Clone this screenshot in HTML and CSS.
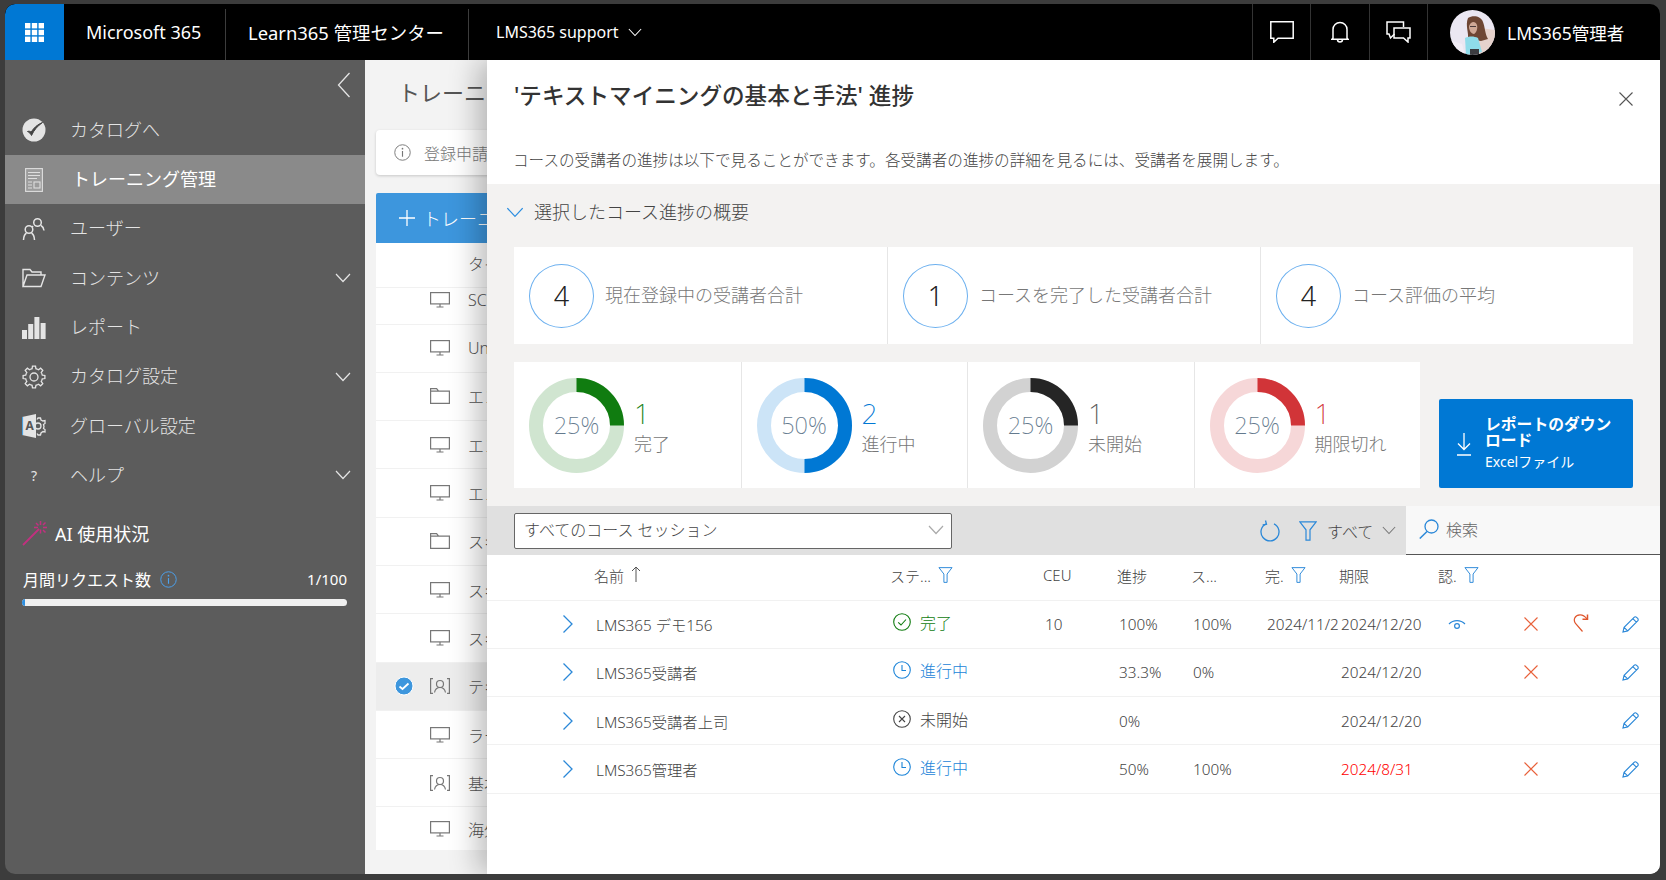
FILE: index.html
```html
<!DOCTYPE html>
<html lang="ja">
<head>
<meta charset="utf-8">
<title>Learn365 管理センター</title>
<link rel="stylesheet" href="styles.css">
</head>
<body>
<svg class="sprite" xmlns="http://www.w3.org/2000/svg">
  <symbol id="waffle" viewBox="0 0 19 19"><g fill="currentColor"><rect width="5.4" height="5.4"/><rect x="6.8" width="5.4" height="5.4"/><rect x="13.6" width="5.4" height="5.4"/><rect y="6.8" width="5.4" height="5.4"/><rect x="6.8" y="6.8" width="5.4" height="5.4"/><rect x="13.6" y="6.8" width="5.4" height="5.4"/><rect y="13.6" width="5.4" height="5.4"/><rect x="6.8" y="13.6" width="5.4" height="5.4"/><rect x="13.6" y="13.6" width="5.4" height="5.4"/></g></symbol>
  <symbol id="chev-down" viewBox="0 0 16 10"><path d="M1 1l7 7.5L15 1" fill="none" stroke="currentColor" stroke-width="1.2"/></symbol>
  <symbol id="chev-right" viewBox="0 0 12 20"><path d="M1.5 1.5L10 10l-8.500 8.500" fill="none" stroke="currentColor" stroke-width="1.3"/></symbol>
  <symbol id="chev-left" viewBox="0 0 14 26"><path d="M12.500 1L1.500 13l11 12" fill="none" stroke="currentColor" stroke-width="1.300"/></symbol>
  <symbol id="comment" viewBox="0 0 24 22"><path d="M.8.800h22.400v16.400H8l-4.200 4v-4H.8z" fill="none" stroke="currentColor" stroke-width="1.500"/></symbol>
  <symbol id="bell" viewBox="0 0 18 22"><path d="M2 17V8.500a7 7 0 0 1 14 0V17l1 1.200H1zM6.500 18.500a2.500 2.500 0 0 0 5 0" fill="none" stroke="currentColor" stroke-width="1.500"/></symbol>
  <symbol id="chat" viewBox="0 0 25 22"><path d="M17.500 6V1H1v12h2l1.500 4 4-4" fill="none" stroke="currentColor" stroke-width="1.500"/><path d="M8 7h16v10h-2v4l-4.500-4H8z" fill="none" stroke="currentColor" stroke-width="1.500"/></symbol>
  <symbol id="close" viewBox="0 0 14 14"><path d="M.5.500l13 13M13.500.500l-13 13" fill="none" stroke="currentColor" stroke-width="1.100"/></symbol>
  <symbol id="catalog" viewBox="0 0 24 24"><circle cx="12" cy="12" r="11.500" fill="currentColor"/><path d="M5.500 13.500c1.800.8 3 2 4 4 2.500-5.500 6-9.500 11-13-5 2-8.500 5-11.300 9.500-1.200-.8-2.500-1-3.700-.5z" fill="#444" stroke="#444" stroke-width="1"/></symbol>
  <symbol id="doc" viewBox="0 0 18 24"><g fill="none" stroke="currentColor" stroke-width="1.100"><rect x=".6" y=".6" width="16.800" height="22.800" fill="#9c9c9c"/><path d="M3 4.500h12M3 7.500h12M3 10.500h9M3 14h4M3 17h4M3 20h4"/><rect x="9" y="14" width="6" height="6"/></g></symbol>
  <symbol id="users" viewBox="0 0 24 24"><g fill="none" stroke="currentColor" stroke-width="1.500"><circle cx="15.500" cy="5.500" r="3.800"/><path d="M19 8.500c1.800 1 2.700 2.800 3 5M11 9c-.3.400-.5.700-.6 1.200"/><circle cx="7" cy="12.500" r="3.800"/><path d="M1.500 23c.2-3.500 1.300-6 3-7M12.500 23c-.2-3.500-1.300-6-3-7"/></g></symbol>
  <symbol id="folder-open" viewBox="0 0 24 20"><path d="M1 18.500V1.500h7l2 2.500h9v3M1 18.500L5 7h18l-4 11.500z" fill="none" stroke="currentColor" stroke-width="1.400"/></symbol>
  <symbol id="bars" viewBox="0 0 24 22"><g fill="currentColor"><rect y="13" width="5" height="9"/><rect x="6.200" y="7" width="5" height="15"/><rect x="12.400" width="5" height="22"/><rect x="18.600" y="6" width="5" height="16"/></g></symbol>
  <symbol id="gear" viewBox="0 0 24 24"><g fill="none" stroke="currentColor" stroke-width="1.300"><circle cx="12" cy="12" r="4"/><path id="tooth" d="M8.750 4.150L10.090 3.720 10.470 1.110H13.530L13.910 3.720 15.250 4.150"/><use href="#tooth" transform="rotate(45 12 12)"/><use href="#tooth" transform="rotate(90 12 12)"/><use href="#tooth" transform="rotate(135 12 12)"/><use href="#tooth" transform="rotate(180 12 12)"/><use href="#tooth" transform="rotate(225 12 12)"/><use href="#tooth" transform="rotate(270 12 12)"/><use href="#tooth" transform="rotate(315 12 12)"/></g></symbol>
  <symbol id="admin" viewBox="0 0 24 24"><g fill="none" stroke="currentColor" stroke-width="1.300"><path d="M15 5.500l1-1.500h2.500l.5 2 2 1 2-.5v3l-1.500 1 .5 2-.5 2 1.500 1v2.500l-2-.5-2 1.500-.5 2H16l-1-1.500"/><circle cx="16" cy="12" r="3"/></g><path d="M0 3l14-3v24L0 21z" fill="currentColor"/><path d="M.5 3v18" stroke="#4ba3e3" stroke-width="1.200"/></symbol>
  <symbol id="wand" viewBox="0 0 26 26"><path d="M1 25L17 9" stroke="#c2307f" stroke-width="1.800" fill="none"/><g stroke="#c2307f" stroke-width="1.500" fill="none"><path d="M18.500 1v4M18.500 9.500v4M12 7.500h4M21 7.500h4M14 3l2.500 2.500M21 10l2.500 2.500M21 5l2.500-2.500"/></g></symbol>
  <symbol id="info" viewBox="0 0 18 18"><circle cx="9" cy="9" r="8.200" fill="none" stroke="currentColor" stroke-width="1"/><path d="M9 7.500v6" stroke="currentColor" stroke-width="1.200"/><circle cx="9" cy="5" r=".9" fill="currentColor"/></symbol>
  <symbol id="plus" viewBox="0 0 16 16"><path d="M8 0v16M0 8h16" stroke="currentColor" stroke-width="1.300" fill="none"/></symbol>
  <symbol id="monitor" viewBox="0 0 20 16"><g fill="none" stroke="currentColor" stroke-width="1.200"><rect x=".6" y=".6" width="18.800" height="11.300"/><path d="M10 12v3M6.500 15h7"/></g></symbol>
  <symbol id="folder" viewBox="0 0 20 16"><path d="M.6 15.400V.6h6l2 2.600h10.800v12.200zM.6 3.200h8" fill="none" stroke="currentColor" stroke-width="1.200"/></symbol>
  <symbol id="classroom" viewBox="0 0 20 16"><g fill="none" stroke="currentColor" stroke-width="1.200"><path d="M3 .6H.6v14.800H3M17 .6h2.400v14.800H17"/><circle cx="10" cy="6" r="3.500"/><path d="M4.500 14.500c.6-3 2.500-5 5.500-5s4.900 2 5.500 5"/></g></symbol>
  <symbol id="check-badge" viewBox="0 0 20 20"><circle cx="10" cy="10" r="9" fill="#3d96dd" stroke="#fff" stroke-width="1"/><path d="M5.500 10.500l3 2.500 6-5.500" fill="none" stroke="#fff" stroke-width="1.800"/></symbol>
  <symbol id="download" viewBox="0 0 16 24"><path d="M8 1v16M2 11.500l6 6 6-6M1 23h14" fill="none" stroke="currentColor" stroke-width="1.300"/></symbol>
  <symbol id="refresh" viewBox="0 0 20 22"><path d="M6 3.800A9 9 0 1 0 14 3.800" fill="none" stroke="currentColor" stroke-width="1.300"/><path d="M5.500 .5l1 3.800-3.800 .7" fill="none" stroke="currentColor" stroke-width="1.300"/></symbol>
  <symbol id="filter" viewBox="0 0 18 20"><path d="M.8.800h16.400L11 8.800v10.400H7V8.800z" fill="none" stroke="currentColor" stroke-width="1.200"/></symbol>
  <symbol id="search" viewBox="0 0 20 20"><circle cx="12.500" cy="7.500" r="6.500" fill="none" stroke="currentColor" stroke-width="1.300"/><path d="M8 12.500L.8 19.500" fill="none" stroke="currentColor" stroke-width="1.500"/></symbol>
  <symbol id="arrow-up" viewBox="0 0 10 16"><path d="M5 16V1M1 5l4-4 4 4" fill="none" stroke="currentColor" stroke-width="1"/></symbol>
  <symbol id="ok-circle" viewBox="0 0 18 18"><circle cx="9" cy="9" r="8.300" fill="none" stroke="currentColor" stroke-width="1.100"/><path d="M5.200 9.300l2.800 2.700 5-5.500" fill="none" stroke="currentColor" stroke-width="1.100"/></symbol>
  <symbol id="clock" viewBox="0 0 18 18"><circle cx="9" cy="9" r="8.300" fill="none" stroke="currentColor" stroke-width="1.100"/><path d="M9 4v5.500h4" fill="none" stroke="currentColor" stroke-width="1.100"/></symbol>
  <symbol id="x-circle" viewBox="0 0 18 18"><circle cx="9" cy="9" r="8.300" fill="none" stroke="currentColor" stroke-width="1.100"/><path d="M6 6l6 6M12 6l-6 6" fill="none" stroke="currentColor" stroke-width="1.100"/></symbol>
  <symbol id="eye" viewBox="0 0 18 12"><path d="M1 6a11 11 0 0 1 16 0" fill="none" stroke="currentColor" stroke-width="1.200"/><circle cx="9" cy="8" r="2.400" fill="none" stroke="currentColor" stroke-width="1.200"/></symbol>
  <symbol id="redo" viewBox="0 0 16 18"><path d="M9.500 17.500L2.500 9.500C0 6 1.500 1 7 .8c3-.1 5 1.500 7 4" fill="none" stroke="currentColor" stroke-width="1.200"/><path d="M9.500 5.200h5V.5" fill="none" stroke="currentColor" stroke-width="1.500"/></symbol>
  <symbol id="pencil" viewBox="0 0 18 18"><path d="M1 17l1.200-5L12.800 1.400a1.800 1.800 0 0 1 2.600 0l1.200 1.200a1.800 1.800 0 0 1 0 2.600L6 15.800zM2.200 12L6 15.800M11.500 2.800l3.700 3.700" fill="none" stroke="currentColor" stroke-width="1.200"/></symbol>
</svg>

<div class="window">
  <header class="topbar">
    <div class="waffle"><svg class="i-waffle"><use href="#waffle"/></svg></div>
    <div class="brand">Microsoft 365</div>
    <span class="sep"></span>
    <div class="app">Learn365 管理センター</div>
    <span class="sep"></span>
    <div class="tenant">LMS365 support<svg class="i-tenant"><use href="#chev-down"/></svg></div>
    <div class="top-right">
      <div class="top-cell"><svg class="i-comment"><use href="#comment"/></svg></div>
      <div class="top-cell"><svg class="i-bell"><use href="#bell"/></svg></div>
      <div class="top-cell"><svg class="i-chat"><use href="#chat"/></svg></div>
      <div class="top-user">
        <svg class="avatar" viewBox="0 0 45 45">
          <rect width="45" height="45" fill="#ebe7f2"/>
          <path d="M30 18l15 2v25H28z" fill="#e6d2cc"/>
          <path d="M0 30l12 4 3 11H0z" fill="#f2eef6"/>
          <path d="M18 8c5-3 13-2 15 4 2 5 2 12 5 17l-7 2-13-2c1-6-3-14 0-21z" fill="#6e4634"/>
          <path d="M21 13c2-2 5-1 6 2 1 4-1 8-3 9-3 0-5-4-5-7 0-2 1-3 2-4z" fill="#cfa896"/>
          <path d="M20 16.500h6" stroke="#4a3a3a" stroke-width="1"/>
          <path d="M15 28c4-2 9-2 13 0l4 14-16 3z" fill="#8fdcea"/>
          <path d="M20 39h9v6h-9z" fill="#3c3c40"/>
        </svg>
        <span>LMS365管理者</span>
      </div>
    </div>
  </header>

  <div class="content">
    <nav class="sidebar">
      <div class="collapse"><svg class="i-collapse"><use href="#chev-left"/></svg></div>
      <a class="nav-item"><svg class="nav-icon"><use href="#catalog"/></svg><span>カタログへ</span></a>
      <a class="nav-item active"><svg class="nav-icon i-doc"><use href="#doc"/></svg><span>トレーニング管理</span></a>
      <a class="nav-item"><svg class="nav-icon"><use href="#users"/></svg><span>ユーザー</span></a>
      <a class="nav-item"><svg class="nav-icon"><use href="#folder-open"/></svg><span>コンテンツ</span><svg class="nav-chev"><use href="#chev-down"/></svg></a>
      <a class="nav-item"><svg class="nav-icon"><use href="#bars"/></svg><span>レポート</span></a>
      <a class="nav-item"><svg class="nav-icon"><use href="#gear"/></svg><span>カタログ設定</span><svg class="nav-chev"><use href="#chev-down"/></svg></a>
      <a class="nav-item"><svg class="nav-icon" viewBox="0 0 24 24"><use href="#admin"/><text x="3.500" y="16" class="admin-a">A</text></svg><span>グローバル設定</span></a>
      <a class="nav-item"><b class="nav-q">?</b><span>ヘルプ</span><svg class="nav-chev"><use href="#chev-down"/></svg></a>
      <div class="ai-title"><svg class="i-wand"><use href="#wand"/></svg><span>AI 使用状況</span></div>
      <div class="ai-row"><span>月間リクエスト数</span><svg class="i-ai-info"><use href="#info"/></svg><span class="ai-count">1/100</span></div>
      <div class="ai-bar"><div class="ai-fill" style="width:1%"></div></div>
    </nav>

    <main class="main">
      <h1 class="page-title">トレーニング管理</h1>
      <div class="notice"><svg class="i-notice"><use href="#info"/></svg><span>登録申請があります</span></div>
      <div class="add-btn"><svg class="i-plus"><use href="#plus"/></svg><span>トレーニングの追加</span></div>
      <div class="list">
        <div class="list-head">タイトル</div>
        <div class="list-row first"><span></span><svg class="i-list"><use href="#monitor"/></svg><span>SCORM</span></div>
        <div class="list-row"><span></span><svg class="i-list"><use href="#monitor"/></svg><span>Unit</span></div>
        <div class="list-row"><span></span><svg class="i-list"><use href="#folder"/></svg><span>エンゲージ</span></div>
        <div class="list-row"><span></span><svg class="i-list"><use href="#monitor"/></svg><span>エンゲージ</span></div>
        <div class="list-row"><span></span><svg class="i-list"><use href="#monitor"/></svg><span>エンゲージ</span></div>
        <div class="list-row"><span></span><svg class="i-list"><use href="#folder"/></svg><span>スキル</span></div>
        <div class="list-row"><span></span><svg class="i-list"><use href="#monitor"/></svg><span>スキル</span></div>
        <div class="list-row"><span></span><svg class="i-list"><use href="#monitor"/></svg><span>スキル</span></div>
        <div class="list-row selected"><svg class="i-check"><use href="#check-badge"/></svg><svg class="i-list"><use href="#classroom"/></svg><span>テキスト</span></div>
        <div class="list-row"><span></span><svg class="i-list"><use href="#monitor"/></svg><span>ラーニング</span></div>
        <div class="list-row"><span></span><svg class="i-list"><use href="#classroom"/></svg><span>基本</span></div>
        <div class="list-row last"><span></span><svg class="i-list"><use href="#monitor"/></svg><span>海外</span></div>
      </div>

      <section class="panel">
        <div class="panel-head">
          <h2 class="panel-title">'テキストマイニングの基本と手法' 進捗</h2>
          <svg class="i-close"><use href="#close"/></svg>
        </div>
        <p class="panel-desc">コースの受講者の進捗は以下で見ることができます。各受講者の進捗の詳細を見るには、受講者を展開します。</p>

        <div class="summary">
          <div class="summary-toggle"><svg class="i-toggle"><use href="#chev-down"/></svg><span>選択したコース進捗の概要</span></div>
          <div class="stats">
            <div class="stat"><span class="stat-num">4</span><span class="stat-label">現在登録中の受講者合計</span></div>
            <div class="stat"><span class="stat-num">1</span><span class="stat-label">コースを完了した受講者合計</span></div>
            <div class="stat"><span class="stat-num">4</span><span class="stat-label">コース評価の平均</span></div>
          </div>
          <div class="charts">
            <div class="donuts">
              <div class="donut-card green">
                <div class="donut"><svg viewBox="0 0 95 95"><circle class="track" cx="47.500" cy="47.500" r="40.500"/><circle class="arc" cx="47.500" cy="47.500" r="40.500" pathLength="100" stroke-dasharray="25 75" transform="rotate(-90 47.500 47.500)"/></svg><span>25%</span></div>
                <div class="donut-text"><b>1</b><span>完了</span></div>
              </div>
              <div class="donut-card blue">
                <div class="donut"><svg viewBox="0 0 95 95"><circle class="track" cx="47.500" cy="47.500" r="40.500"/><circle class="arc" cx="47.500" cy="47.500" r="40.500" pathLength="100" stroke-dasharray="50 50" transform="rotate(-90 47.500 47.500)"/></svg><span>50%</span></div>
                <div class="donut-text"><b>2</b><span>進行中</span></div>
              </div>
              <div class="donut-card black">
                <div class="donut"><svg viewBox="0 0 95 95"><circle class="track" cx="47.500" cy="47.500" r="40.500"/><circle class="arc" cx="47.500" cy="47.500" r="40.500" pathLength="100" stroke-dasharray="25 75" transform="rotate(-90 47.500 47.500)"/></svg><span>25%</span></div>
                <div class="donut-text"><b>1</b><span>未開始</span></div>
              </div>
              <div class="donut-card red">
                <div class="donut"><svg viewBox="0 0 95 95"><circle class="track" cx="47.500" cy="47.500" r="40.500"/><circle class="arc" cx="47.500" cy="47.500" r="40.500" pathLength="100" stroke-dasharray="25 75" transform="rotate(-90 47.500 47.500)"/></svg><span>25%</span></div>
                <div class="donut-text"><b>1</b><span>期限切れ</span></div>
              </div>
            </div>
            <div class="download">
              <svg class="i-download"><use href="#download"/></svg>
              <div class="download-text"><strong>レポートのダウンロード</strong><span>Excelファイル</span></div>
            </div>
          </div>
        </div>

        <div class="toolbar">
          <div class="select"><span>すべてのコース セッション</span><svg class="i-select"><use href="#chev-down"/></svg></div>
          <svg class="i-refresh"><use href="#refresh"/></svg>
          <svg class="i-tfilter"><use href="#filter"/></svg>
          <span class="all">すべて</span>
          <svg class="i-all"><use href="#chev-down"/></svg>
          <div class="search"><svg class="i-search"><use href="#search"/></svg><span>検索</span></div>
        </div>

        <div class="t-row t-head">
          <span></span>
          <span class="th name">名前<svg class="i-sort"><use href="#arrow-up"/></svg></span>
          <span class="th">ステ...<svg class="i-fil"><use href="#filter"/></svg></span>
          <span class="th">CEU</span>
          <span class="th">進捗</span>
          <span class="th">ス...</span>
          <span class="th">完.<svg class="i-fil"><use href="#filter"/></svg></span>
          <span class="th">期限</span>
          <span class="th">認.<svg class="i-fil"><use href="#filter"/></svg></span>
        </div>

        <div class="t-row">
          <svg class="i-expand"><use href="#chev-right"/></svg>
          <span>LMS365 デモ156</span>
          <span class="status done"><svg class="i-status"><use href="#ok-circle"/></svg>完了</span>
          <span>10</span><span>100%</span><span>100%</span><span>2024/11/20</span><span>2024/12/20</span>
          <span class="cert"><svg class="i-eye"><use href="#eye"/></svg></span>
          <span class="act"><svg class="i-x"><use href="#close"/></svg></span>
          <span class="act"><svg class="i-redo"><use href="#redo"/></svg></span>
          <span class="act"><svg class="i-pencil"><use href="#pencil"/></svg></span>
        </div>
        <div class="t-row">
          <svg class="i-expand"><use href="#chev-right"/></svg>
          <span>LMS365受講者</span>
          <span class="status going"><svg class="i-status"><use href="#clock"/></svg>進行中</span>
          <span></span><span>33.3%</span><span>0%</span><span></span><span>2024/12/20</span>
          <span class="cert"></span>
          <span class="act"><svg class="i-x"><use href="#close"/></svg></span>
          <span class="act"></span>
          <span class="act"><svg class="i-pencil"><use href="#pencil"/></svg></span>
        </div>
        <div class="t-row">
          <svg class="i-expand"><use href="#chev-right"/></svg>
          <span>LMS365受講者上司</span>
          <span class="status"><svg class="i-status"><use href="#x-circle"/></svg>未開始</span>
          <span></span><span>0%</span><span></span><span></span><span>2024/12/20</span>
          <span class="cert"></span>
          <span class="act"></span>
          <span class="act"></span>
          <span class="act"><svg class="i-pencil"><use href="#pencil"/></svg></span>
        </div>
        <div class="t-row">
          <svg class="i-expand"><use href="#chev-right"/></svg>
          <span>LMS365管理者</span>
          <span class="status going"><svg class="i-status"><use href="#clock"/></svg>進行中</span>
          <span></span><span>50%</span><span>100%</span><span></span><span class="overdue">2024/8/31</span>
          <span class="cert"></span>
          <span class="act"><svg class="i-x"><use href="#close"/></svg></span>
          <span class="act"></span>
          <span class="act"><svg class="i-pencil"><use href="#pencil"/></svg></span>
        </div>
      </section>
    </main>
  </div>
</div>
</body>
</html>
```
FILE: styles.css
```css
* { box-sizing: border-box; }
html, body { margin: 0; height: 100%; }
body {
  background: #3c3c3c;
  font-family: "Noto Sans", "Noto Sans CJK JP", sans-serif;
  font-weight: 300;
  color: #444;
  overflow: hidden;
  padding: 4px 6px 6px 5px;
}
.sprite { display: none; }
svg { display: block; flex: none; }

.window { height: 870px; display: flex; flex-direction: column; border-radius: 10px; overflow: hidden; }

/* top bar */
.topbar { height: 56px; background: #000; color: #fff; display: flex; align-items: center; font-size: 18px; flex: none; font-weight: 400; }
.waffle { width: 59px; height: 56px; background: #0078d4; display: flex; align-items: center; justify-content: center; border-radius: 10px 0 0 0; }
.i-waffle { width: 19px; height: 19px; color: #fff; margin-top: 1px; }
.brand { width: 161px; padding-left: 22px; }
.sep { width: 1px; height: 51px; margin-top: 5px; background: #3c3c3c; }
.app { width: 242px; padding-left: 22px; white-space: nowrap; font-size: 18.400px; }
.tenant { display: flex; align-items: center; gap: 9px; padding-left: 27px; font-size: 16px; }
.i-tenant { width: 14px; height: 9px; }
.top-right { margin-left: auto; display: flex; height: 100%; }
.top-cell { width: 58.400px; border-left: 1px solid #333; display: flex; align-items: center; justify-content: center; }
.i-comment { width: 24px; height: 22px; }
.i-bell { width: 18px; height: 22px; }
.i-chat { width: 25px; height: 22px; }
.top-user { width: 233px; border-left: 1px solid #333; display: flex; align-items: center; gap: 12px; padding-left: 22px; font-size: 17.500px; }
.avatar { width: 45px; height: 45px; border-radius: 50%; filter: blur(.5px); }

/* layout */
.content { flex: 1; display: flex; min-height: 0; }

/* sidebar */
.sidebar { width: 360px; background: #5c5c5c; color: #e4e4e4; display: flex; flex-direction: column; flex: none; }
.collapse { height: 45.700px; display: flex; justify-content: flex-end; align-items: center; padding: 0 14px 0 0; }
.i-collapse { width: 14px; height: 26px; margin-top: 4px; }
.nav-item { height: 49.300px; display: flex; align-items: center; font-size: 18px; padding-left: 17px; }
.nav-item span { padding-bottom: 3px; }
.nav-item.active { background: #8a8a8a; color: #fff; font-weight: 400; }
.nav-item.active span { margin-left: 2px; }
.nav-icon { width: 24px; height: 24px; margin-right: 24px; }
.admin-a { font-size: 12px; font-weight: 700; fill: #555; }
.i-doc { color: #dedede; }
.nav-q { width: 24px; margin-right: 24px; text-align: center; font-size: 14px; font-weight: 400; }
.nav-chev { width: 16px; height: 10px; margin-left: auto; margin-right: 14px; }
.ai-title { display: flex; align-items: center; gap: 7px; margin: 20px 0 0 17px; font-size: 18px; color: #fff; font-weight: 400; height: 26px; }
.ai-title span { margin-top: -1px; }
.i-wand { width: 26px; height: 26px; }
.ai-row { display: flex; align-items: center; margin: 21px 18px 0 18px; font-size: 16px; color: #fff; font-weight: 400; height: 24px; }
.i-ai-info { width: 17px; height: 17px; color: #4ba3f0; margin-left: 9px; }
.ai-count { margin-left: auto; font-size: 15px; }
.ai-bar { height: 7px; margin: 8px 18px 0 17px; background: #f0f0f0; border-radius: 4px; overflow: hidden; }
.ai-fill { height: 100%; background: #2f8fe0; }

/* main behind panel */
.main { flex: 1; background: #f3f3f3; position: relative; overflow: hidden; padding: 0 0 0 11px; }
.page-title { margin: 18px 0 0 22px; font-size: 22px; line-height: 28px; font-weight: 400; color: #555; white-space: nowrap; }
.notice { margin-top: 24px; height: 45px; background: #fff; border-radius: 4px; box-shadow: 0 1px 3px rgba(0,0,0,.18); display: flex; align-items: center; gap: 13px; padding-left: 18px; font-size: 16px; color: #777; width: 400px; }
.i-notice { width: 17px; height: 17px; color: #777; }
.add-btn { margin-top: 18px; height: 50px; width: 400px; background: #3d96dd; color: #fff; display: flex; align-items: center; gap: 8px; padding-left: 23px; font-size: 18px; border-radius: 2px 2px 0 0; }
.i-plus { width: 16px; height: 16px; }
.list { background: #fff; width: 400px; }
.list-head { height: 44px; padding: 8px 0 0 92px; font-size: 16px; color: #555; line-height: 26px; }
.list-row { height: 48.300px; display: grid; grid-template-columns: 54px 20px 1fr; align-items: center; border-top: 1px solid #f1f1f1; font-size: 16px; color: #555; }
.list-row > span:last-child { padding-left: 18px; white-space: nowrap; }
.list-row.first { height: 36.500px; padding-bottom: 12px; }
.list-row.last { height: 44px; }
.list-row.selected { background: #ededed; }
.i-list { width: 20px; height: 16px; color: #777; }
.i-check { width: 20px; height: 20px; margin-left: 18px; }

/* panel */
.panel { position: absolute; top: 0; left: 122px; right: 0; bottom: 0; background: #fff; box-shadow: -8px 0 30px rgba(0,0,0,.28); display: flex; flex-direction: column; border-radius: 0 0 8px 0; overflow: visible; }
.panel-head { display: flex; justify-content: space-between; align-items: flex-start; padding: 21px 27px 0 27px; }
.panel-title { margin: 0; font-size: 22.600px; line-height: 30px; font-weight: 500; color: #333; white-space: nowrap; }
.i-close { width: 14px; height: 14px; margin-top: 11px; color: #555; }
.panel-desc { margin: 37px 0 0 26px; font-size: 15.600px; line-height: 24px; height: 36px; color: #444; white-space: nowrap; }
.summary { background: #f3f2f1; height: 322px; padding: 0 27px; display: flex; flex-direction: column; }
.summary-toggle { height: 56px; display: flex; align-items: center; gap: 10px; font-size: 18px; color: #444; }
.summary-toggle span { padding-bottom: 2px; }
.i-toggle { width: 18px; height: 11px; color: #2e8fe0; margin-left: -8px; }
.stats { margin-top: 7px; height: 97px; background: #fff; display: grid; grid-template-columns: repeat(3, 1fr); flex: none; }
.stat { display: flex; align-items: center; gap: 11px; padding-left: 15px; border-left: 1px solid #e6e6e6; }
.stat:first-child { border-left: 0; }
.stat-num { width: 65px; height: 64px; border: 1px solid #6cb0ef; border-radius: 50%; display: flex; align-items: center; justify-content: center; font-size: 27px; color: #222; flex: none; }
.stat-label { font-size: 18px; color: #777; white-space: nowrap; padding-bottom: 4px; }
.charts { margin-top: 18px; height: 126px; display: flex; align-items: flex-end; gap: 19px; flex: none; }
.donuts { width: 906px; height: 126px; display: grid; grid-template-columns: repeat(4, 1fr); background: #fff; flex: none; }
.donut-card { display: flex; align-items: center; gap: 10px; padding-left: 15px; border-left: 1px solid #e6e6e6; }
.donut-card:first-child { border-left: 0; }
.donut { display: grid; width: 95px; height: 95px; place-items: center; flex: none; }
.donut > * { grid-area: 1 / 1; }
.donut svg { width: 95px; height: 95px; }
.donut span { font-size: 23.500px; color: #647a8e; font-weight: 200; }
.track, .arc { fill: none; stroke-width: 14; }
.donut-text { display: flex; flex-direction: column; font-size: 18px; color: #777; padding-top: 1px; }
.donut-text b { font-weight: 200; font-size: 28px; line-height: 36px; }
.donut-text span { line-height: 26px; white-space: nowrap; }
.green .track { stroke: #d0e5d0; } .green .arc { stroke: #107c10; } .green b { color: #107c10; }
.blue .track { stroke: #cce4f7; } .blue .arc { stroke: #0078d4; } .blue b { color: #0078d4; }
.black .track { stroke: #d2d2d2; } .black .arc { stroke: #252525; } .black b { color: #555; }
.red .track { stroke: #f6d7d8; } .red .arc { stroke: #d13438; } .red b { color: #d13438; }
.download { flex: 1; height: 89px; background: #0078d4; border-radius: 2px; color: #fff; display: flex; align-items: center; gap: 13px; padding: 0 12px 0 17px; }
.i-download { width: 16px; height: 24px; }
.download-text { display: flex; flex-direction: column; }
.download-text strong { font-size: 15.800px; line-height: 16px; font-weight: 700; }
.download-text span { font-size: 14px; line-height: 18px; margin-top: 5px; font-weight: 400; }

/* toolbar */
.toolbar { height: 49px; background: #e0e0e0; display: flex; align-items: center; padding-left: 27px; flex: none; }
.select { width: 438px; height: 36px; background: #fff; border: 1px solid #666; border-radius: 2px; display: flex; align-items: center; justify-content: space-between; padding: 0 7px 3px 9px; font-size: 16px; color: #444; }
.i-select { width: 16px; height: 10px; color: #aaa; margin-top: 2px; }
.i-refresh { width: 20px; height: 22px; color: #2b88d8; margin-left: 308px; }
.i-tfilter { width: 18px; height: 20px; color: #2b88d8; margin-left: 19px; }
.all { margin-left: 10px; font-size: 16px; color: #444; white-space: nowrap; }
.i-all { width: 14px; height: 9px; color: #777; margin-left: 9px; }
.search { margin-left: auto; width: 254px; height: 49px; background: #f8f8f8; border-bottom: 1px solid #555; display: flex; align-items: center; gap: 7px; padding: 0 0 2px 13px; font-size: 16px; color: #666; }
.i-search { width: 20px; height: 20px; color: #2b88d8; }

/* table */
.t-row { display: grid; grid-template-columns: 109px 294px 153px 74px 74px 74px 74px 99px 68px 50px 50px 49px; height: 48.300px; align-items: center; border-bottom: 1px solid #f1f1f1; font-size: 15.300px; color: #444; flex: none; }
:where(.t-row > span) { white-space: nowrap; overflow: hidden; padding-left: 2px; }
.t-row > span:nth-child(2) { padding-left: 0; }
.t-head { height: 45.500px; }
.th { display: flex; align-items: center; gap: 7px; font-size: 15px; padding: 0 0 4px; }
.name { margin-left: -2px; }
.i-sort { width: 10px; height: 16px; color: #555; margin-top: -2px; }
.i-fil { width: 15px; height: 16px; color: #2b88d8; }
.i-expand { width: 12px; height: 20px; color: #2b88d8; justify-self: end; margin-right: 22px; }
.status { display: flex; align-items: center; gap: 9px; padding: 0 0 4px 3px; font-size: 16px; }
.i-status { width: 18px; height: 18px; }
.done { color: #107c10; }
.going { color: #1b84d8; }
.overdue { color: #f00; }
.cert { padding-left: 10px; }
.i-eye { width: 18px; height: 12px; color: #2b88d8; }
.act { display: flex; justify-content: center; padding-left: 0; overflow: visible; }
.i-x { width: 14px; height: 14px; color: #e8613a; }
.i-redo { width: 16px; height: 18px; color: #e0562d; margin-top: -3px; }
.i-pencil { width: 17px; height: 17px; color: #2b88d8; }
```
